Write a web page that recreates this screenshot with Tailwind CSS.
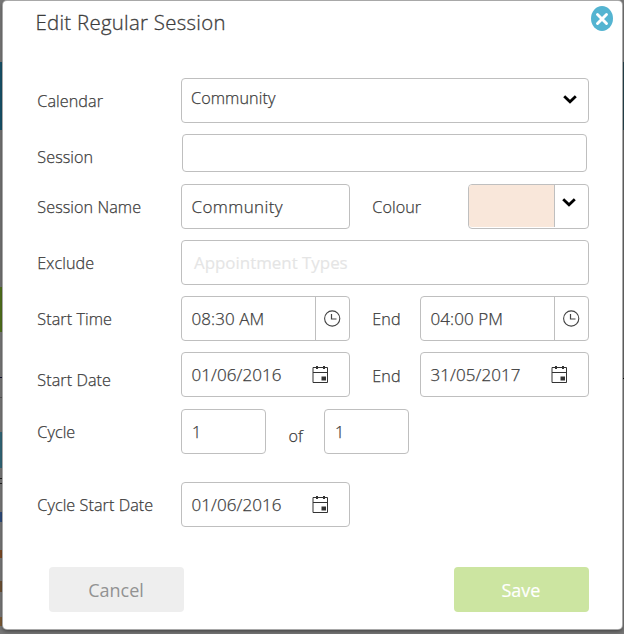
<!DOCTYPE html>
<html lang="en">
<head>
<meta charset="utf-8">
<title>Edit Regular Session</title>
<script src="https://cdn.jsdelivr.net/npm/@tailwindcss/browser@4"></script>
</head>
<body class="relative h-[634px] w-[624px] overflow-hidden bg-[#777777] font-['Open_Sans',sans-serif] text-[#3c3c3c]">
<svg width="0" height="0" class="absolute">
  <defs>
    <symbol id="chevron" viewBox="0 0 14 9"><path d="M1.200 1.200 7 6.800 12.800 1.200" fill="none" stroke="#000" stroke-width="2.800"/></symbol>
    <symbol id="clock" viewBox="0 0 17 17"><circle cx="8.200" cy="8.500" r="7.600" fill="none" stroke="#444" stroke-width="1.100"/><path d="M7.500 4v5H12.500" fill="none" stroke="#444" stroke-width="1.200"/></symbol>
    <symbol id="calendar" viewBox="0 0 16 18"><path d="M1 2.500H15.500V17.500H1ZM1 7.500H15.500" fill="none" stroke="#333"/><path d="M4 1h2v3H4zM11 1h2v3h-2zM9.500 11.500h4.500v4H9.500z" fill="#333"/></symbol>
  </defs>
</svg>
<!-- dimmed page visible at both sides of the dialog -->
<div class="absolute inset-y-0 left-0 w-[3px] overflow-hidden">
  <div class="h-[62px] bg-[#777777]"></div>
  <div class="h-[68px] bg-[#17536a]"></div>
  <div class="h-[157px] bg-[#737373]"></div>
  <div class="h-[45px] bg-[#50701d]"></div>
  <div class="h-[45px] bg-[#777777]"></div>
  <div class="h-px bg-[#111133]"></div>
  <div class="h-[19px] bg-[#777777]"></div>
  <div class="h-px bg-[#555555]"></div>
  <div class="h-[34px] bg-[#777777]"></div>
  <div class="h-[36px] bg-[#326778]"></div>
  <div class="h-[10px] bg-[#777777]"></div>
  <div class="h-px bg-[#222222]"></div>
  <div class="h-[4px] bg-[#777777]"></div>
  <div class="h-px bg-[#222222]"></div>
  <div class="h-[28px] bg-[#777777]"></div>
  <div class="h-[10px] w-[2px] bg-[#2d4b7b]"></div>
  <div class="h-[28px] bg-[#777777]"></div>
  <div class="h-[8px] w-[2px] bg-[#7b4a26]"></div>
  <div class="h-[23px] bg-[#777777]"></div>
  <div class="h-[11px] w-[2px] bg-[#6c5034]"></div>
  <div class="h-[25px] bg-[#777777]"></div>
  <div class="h-[9px] w-[2px] bg-[#7b5a36]"></div>
</div>
<div class="absolute inset-y-0 right-0 w-[2px]">
  <div class="h-[62px] bg-[#777777]"></div>
  <div class="h-[68px] bg-[#26444e]"></div>
  <div class="h-[248px] bg-[#686868]"></div>
  <div class="h-px bg-black"></div>
</div>
<main class="absolute top-px left-[3px] flex h-[628px] w-[619px] flex-col rounded-[4px] bg-white pl-[34px] shadow-[0_0_0_1px_#a8a8a8,0_2px_4px_#00000080]">
  <button aria-label="Close" class="absolute top-[5px] left-[588px] h-[25px] w-[22px] rounded-[50%] bg-[#54b4d1]">
    <svg viewBox="0 0 22 25" class="block h-[25px] w-[22px]"><path d="M6.500 8.500l9 9M15.500 8.500l-9 9" stroke="#fff" stroke-width="2.900" stroke-linecap="round"/></svg>
  </button>
  <h1 class="-ml-[1.500px] h-[77px] pt-[6px] text-[20.400px] leading-[30px] font-light tracking-[0.280px] whitespace-nowrap [-webkit-text-stroke:0.300px]">Edit Regular Session</h1>
  <form class="flex flex-col text-[17px] leading-[22px] font-light tracking-[0.080px] whitespace-nowrap [-webkit-text-stroke:0.250px] [&_label]:pl-[0.300px] [&_label]:text-[16.200px] [&_label]:tracking-[0.060px]">
    <div class="mb-[11px] flex h-[45px] items-center">
      <label class="w-[144px]">Calendar</label>
      <div class="flex h-[45px] w-[408px] items-center justify-between rounded-[4px] border border-[#bfbfbf] pr-[11px] pb-[5px] pl-[9px] text-[16.200px]"><span>Community</span><svg class="mt-[2px] h-[9px] w-[14px]"><use href="#chevron"/></svg></div>
    </div>
    <div class="mb-[5px] flex h-[45px] items-center">
      <label class="w-[145px]">Session</label>
      <div class="h-[38px] w-[405px] self-start rounded-[4px] border border-[#bfbfbf]"></div>
    </div>
    <div class="mb-[11px] flex h-[45px] items-center">
      <label class="w-[144px]">Session Name</label>
      <div class="flex h-[45px] w-[169px] items-center rounded-[4px] border border-[#bfbfbf] pl-[9.500px] tracking-[0.400px]">Community</div>
      <label class="ml-[22px] w-[96px]">Colour</label>
      <div class="flex h-[45px] w-[121px] rounded-[4px] border border-[#bfbfbf]">
        <span class="h-[42px] w-[86px] rounded-l-[3px] border-r border-[#bfbfbf] bg-[#f9e7da]"></span>
        <svg class="mt-[13px] ml-[7px] h-[9px] w-[14px]"><use href="#chevron"/></svg>
      </div>
    </div>
    <div class="mb-[11px] flex h-[45px] items-center">
      <label class="w-[144px]">Exclude</label>
      <div class="flex h-[45px] w-[408px] items-center rounded-[4px] border border-[#bfbfbf] pl-[12px] text-[16.900px] font-normal tracking-normal text-[#e5e5e5] [-webkit-text-stroke:0.100px]">Appointment Types</div>
    </div>
    <div class="mb-[11px] flex h-[45px] items-center">
      <label class="w-[144px]">Start Time</label>
      <div class="flex h-[45px] w-[169px] items-center rounded-[4px] border border-[#bfbfbf]"><span class="flex h-full w-[134px] items-center border-r border-[#bfbfbf] pl-[9.500px]">08:30 AM</span><svg class="ml-[8px] h-[17px] w-[17px]"><use href="#clock"/></svg></div>
      <label class="ml-[22px] w-[48px]">End</label>
      <div class="flex h-[45px] w-[169px] items-center rounded-[4px] border border-[#bfbfbf]"><span class="flex h-full w-[134px] items-center border-r border-[#bfbfbf] pl-[9.500px]">04:00 PM</span><svg class="ml-[8px] h-[17px] w-[17px]"><use href="#clock"/></svg></div>
    </div>
    <div class="mb-[12px] flex h-[45px] items-center">
      <label class="w-[144px] pt-[10px]">Start Date</label>
      <div class="flex h-[45px] w-[169px] items-center justify-between rounded-[4px] border border-[#bfbfbf] pr-[21px] pl-[9.500px]"><span>01/06/2016</span><svg class="mb-px h-[18px] w-[16px]"><use href="#calendar"/></svg></div>
      <label class="ml-[22px] w-[48px] pt-[2px]">End</label>
      <div class="flex h-[45px] w-[169px] items-center justify-between rounded-[4px] border border-[#bfbfbf] pr-[21px] pl-[9.500px]"><span>31/05/2017</span><svg class="mb-px h-[18px] w-[16px]"><use href="#calendar"/></svg></div>
    </div>
    <div class="mb-[28px] flex h-[45px] items-center">
      <label class="w-[144px]">Cycle</label>
      <div class="flex h-[45px] w-[85px] items-center rounded-[4px] border border-[#bfbfbf] pl-[10px] text-[16.200px]">1</div>
      <span class="ml-[22px] w-[36px] pt-[8px] pl-[0.500px] text-[16.200px]">of</span>
      <div class="flex h-[45px] w-[85px] items-center rounded-[4px] border border-[#bfbfbf] pl-[10px] text-[16.200px]">1</div>
    </div>
    <div class="flex h-[45px] items-center">
      <label class="w-[144px]">Cycle Start Date</label>
      <div class="flex h-[45px] w-[169px] items-center justify-between rounded-[4px] border border-[#bfbfbf] pr-[21px] pl-[9.500px]"><span>01/06/2016</span><svg class="mb-px h-[18px] w-[16px]"><use href="#calendar"/></svg></div>
    </div>
    <div class="mt-[40px] ml-[12px] flex w-[540px] justify-between text-[18px] font-normal tracking-normal [-webkit-text-stroke:0]">
      <button type="button" class="h-[45px] w-[135px] rounded-[4px] bg-[#eeeeee] pr-[1px] text-[#929292]">Cancel</button>
      <button type="button" class="h-[45px] w-[135px] rounded-[4px] bg-[#cce5a1] pr-[1px] text-white [-webkit-text-stroke:0.200px]">Save</button>
    </div>
  </form>
</main>
</body>
</html>
